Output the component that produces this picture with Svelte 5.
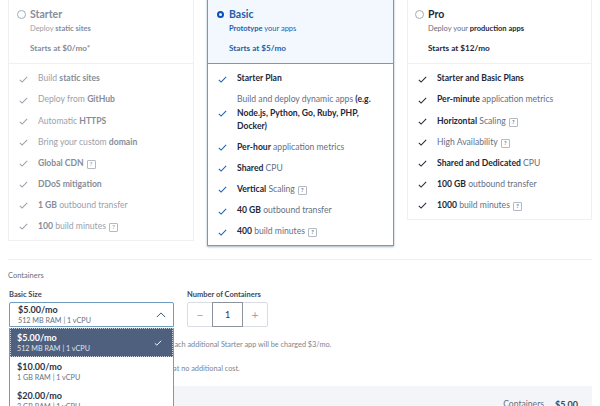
<script>
  const plans = [
    {
      key: 'starter', name: 'Starter', tagline: [['Deploy ', 0], ['static sites', 1]], price: 'Starts at $0/mo*',
      features: [
        [['Build ', 0], ['static sites', 1]],
        [['Deploy from ', 0], ['GitHub', 1]],
        [['Automatic ', 0], ['HTTPS', 1]],
        [['Bring your custom ', 0], ['domain', 1]],
        [['Global CDN', 1], ['?', 2]],
        [['DDoS mitigation', 1]],
        [['1 GB', 1], [' outbound transfer', 0]],
        [['100', 1], [' build minutes', 0], ['?', 2]]
      ]
    },
    {
      key: 'basic', name: 'Basic', tagline: [['Prototype', 1], [' your apps', 0]], price: 'Starts at $5/mo',
      features: [
        [['Starter Plan', 1]],
        [['Build and deploy dynamic apps ', 0], ['(e.g. Node.js, Python, Go, Ruby, PHP, Docker)', 1]],
        [['Per-hour', 1], [' application metrics', 0]],
        [['Shared', 1], [' CPU', 0]],
        [['Vertical', 1], [' Scaling', 0], ['?', 2]],
        [['40 GB', 1], [' outbound transfer', 0]],
        [['400', 1], [' build minutes', 0], ['?', 2]]
      ]
    },
    {
      key: 'pro', name: 'Pro', tagline: [['Deploy your ', 0], ['production apps', 1]], price: 'Starts at $12/mo',
      features: [
        [['Starter and Basic Plans', 1]],
        [['Per-minute', 1], [' application metrics', 0]],
        [['Horizontal', 1], [' Scaling', 0], ['?', 2]],
        [['High Availability', 0], ['?', 2]],
        [['Shared and Dedicated', 1], [' CPU', 0]],
        [['100 GB', 1], [' outbound transfer', 0]],
        [['1000', 1], [' build minutes', 0], ['?', 2]]
      ]
    }
  ];

  const sizes = [
    { price: '$5.00/mo', spec: '512 MB RAM | 1 vCPU', selected: true },
    { price: '$10.00/mo', spec: '1 GB RAM | 1 vCPU' },
    { price: '$20.00/mo', spec: '2 GB RAM | 1 vCPU' }
  ];
</script>

{#snippet rich(parts)}
  {#each parts as [text, kind]}
    {#if kind === 2}
      <span class="help">?</span>
    {:else if kind === 1}
      <b>{text}</b>
    {:else}
      {text}
    {/if}
  {/each}
{/snippet}

<div class="page">
  <div class="plans">
    {#each plans as plan}
      <section class="plan {plan.key}">
        <header>
          <div class="title">
            <span class="radio"></span>
            <span class="name">{plan.name}</span>
          </div>
          <p class="tagline">{@render rich(plan.tagline)}</p>
          <p class="price">{plan.price}</p>
        </header>
        <ul>
          {#each plan.features as feature}
            <li>
              <svg class="check" viewBox="0 0 10 8" width="9" height="7">
                <path d="M0.8 4.4 L3.4 6.9 L9.2 1" fill="none" stroke="currentColor" stroke-width="1.2" />
              </svg>
              <span>{@render rich(feature)}</span>
            </li>
          {/each}
        </ul>
      </section>
    {/each}
  </div>

  <section class="containers">
    <h4>Containers</h4>
    <div class="controls">
      <div class="field size">
        <label for="size">Basic Size</label>
        <div class="select" id="size">
          <div>
            <div class="amount">$5.00/mo</div>
            <div class="spec">512 MB RAM | 1 vCPU</div>
          </div>
          <svg viewBox="0 0 12 7" width="10" height="6">
            <path d="M1 6 L6 1 L11 6" fill="none" stroke="#3d5878" stroke-width="1.2" />
          </svg>
        </div>
        <div class="menu">
          {#each sizes as size}
            <div class="option" class:selected={size.selected}>
              <div>
                <div class="amount">{size.price}</div>
                <div class="spec">{size.spec}</div>
              </div>
              {#if size.selected}
                <svg viewBox="0 0 10 8" width="8" height="6">
                  <path d="M0.8 4.4 L3.4 6.9 L9.2 1" fill="none" stroke="#fff" stroke-width="1.3" />
                </svg>
              {/if}
            </div>
          {/each}
        </div>
      </div>
      <div class="field">
        <span class="label">Number of Containers</span>
        <div class="stepper">
          <span class="step">−</span>
          <span class="count">1</span>
          <span class="step">+</span>
        </div>
      </div>
    </div>
    <p class="note first">Your first three Starter apps are free every month. Each additional Starter app will be charged $3/mo.</p>
    <p class="note second">Bandwidth and builds for Starter apps are included at no additional cost.</p>
    <div class="summary">
      <span>Containers</span>
      <span class="total">$5.00</span>
    </div>
  </section>
</div>

<style>
  :global(body) {
    background: #fff;
  }

  .page {
    height: 406px;
    width: 600px;
    overflow: hidden;
    font-family: "Lato", "Open Sans", sans-serif;
    font-size: 9px;
    color: #66707f;
  }

  .plans {
    display: grid;
    grid-template-columns: 186px 187px 185px;
    column-gap: 13px;
    padding: 0 8px;
    margin-top: -10px;
    align-items: start;
  }

  .plan {
    border: 1px solid #eef0f3;
    box-sizing: border-box;
  }

  .plan header {
    padding: 17px 0 10px 21px;
    height: 73px;
    box-sizing: border-box;
    border-bottom: 1px solid #eef0f3;
    position: relative;
  }

  .title {
    display: flex;
    align-items: center;
    height: 12px;
  }

  .radio {
    position: absolute;
    left: 8px;
    width: 7px;
    height: 7px;
    border: 1px solid #a4acb6;
    border-radius: 50%;
  }

  .name {
    font-size: 10.5px;
    font-weight: 700;
  }

  .tagline {
    margin: 3px 0 0;
    font-size: 7.5px;
    line-height: 11px;
  }

  .price {
    margin: 9px 0 0;
    font-size: 8.2px;
    font-weight: 700;
    line-height: 11px;
  }

  b {
    font-weight: 700;
  }

  ul {
    list-style: none;
    margin: 0;
    padding: 4.5px 0 4px 10px;
  }

  li {
    display: flex;
    align-items: center;
    gap: 10px;
    padding: 3.9px 10px 3.9px 0;
    font-size: 8.6px;
    line-height: 13.3px;
  }

  .check {
    flex: none;
    color: #1f2937;
  }

  .help {
    display: inline-block;
    width: 7px;
    height: 7px;
    line-height: 7px;
    margin-left: 3px;
    border: 1px solid #b4bac3;
    border-radius: 1px;
    font-size: 5.5px;
    text-align: center;
    vertical-align: 0;
    font-weight: 700;
  }

  .starter {
    color: #9aa1ab;
    height: 251px;
  }

  .starter .name,
  .starter .price,
  .starter b {
    color: #858d99;
  }

  .starter .check {
    color: #9aa1ab;
  }

  .basic {
    height: 256px;
    border: 1px solid #6f9cc1;
    box-shadow: 0 1px 2px rgba(60, 90, 120, 0.45);
  }

  .basic header {
    background: #f2f8fd;
    border-bottom-color: #6f9cc1;
  }

  .basic .radio {
    left: 9px;
    width: 3px;
    height: 3px;
    border: 2.5px solid #0b4fb8;
  }

  .basic .name,
  .basic .tagline,
  .basic .price {
    color: #1f5fa8;
  }

  .basic .tagline b {
    color: #1f5fa8;
  }

  .basic .check {
    color: #1f5fa8;
  }

  .basic b,
  .pro b {
    color: #1d2838;
  }

  .pro {
    height: 230px;
  }

  .pro header {
    padding-left: 20px;
  }

  .pro .radio {
    left: 7px;
  }

  .pro .name,
  .pro .price {
    color: #1d2838;
  }

  .containers {
    margin: 13px 8px 0;
    border-top: 1px solid #eef0f3;
    padding-top: 10px;
    position: relative;
    height: 146px;
  }

  h4 {
    margin: 0;
    font-size: 7.5px;
    line-height: 11px;
    font-weight: 400;
    color: #66707f;
  }

  .controls {
    display: flex;
    gap: 13px;
    margin-top: 9px;
  }

  .field {
    display: flex;
    flex-direction: column;
    gap: 2px;
  }

  .size {
    width: 165px;
    position: relative;
    margin-left: 1px;
  }

  label,
  .label {
    font-size: 7.5px;
    font-weight: 700;
    line-height: 10px;
    color: #3d4857;
  }

  .select {
    height: 25px;
    box-sizing: border-box;
    border: 1px solid #6f9cc1;
    border-radius: 2px 2px 0 0;
    display: flex;
    justify-content: space-between;
    align-items: center;
    padding: 0 7px 0 8px;
  }

  .amount {
    font-size: 9px;
    font-weight: 700;
    line-height: 11px;
    color: #2b3544;
  }

  .spec {
    font-size: 7.2px;
    line-height: 11px;
    color: #66707f;
  }

  .menu {
    position: absolute;
    top: 38px;
    left: 0;
    width: 100%;
    box-sizing: border-box;
    background: #fff;
    border: 1px solid #6f9cc1;
    border-top: 0;
    z-index: 1;
  }

  .option {
    height: 29px;
    box-sizing: border-box;
    display: flex;
    justify-content: space-between;
    align-items: center;
    padding: 0 11px 0 7px;
  }

  .option.selected {
    background: #4f607e;
    outline: 1px dotted #c7cfdb;
    outline-offset: -1px;
  }

  .option.selected .amount {
    color: #fff;
  }

  .option.selected .spec {
    color: #dfe4ec;
  }

  .stepper {
    display: flex;
    height: 25px;
    width: 81px;
    box-sizing: border-box;
    border: 1px solid #d9dde3;
    border-radius: 2px;
  }

  .step {
    flex: 1;
    display: flex;
    align-items: center;
    justify-content: center;
    color: #9aa3ae;
    font-size: 12px;
  }

  .count {
    width: 31px;
    flex: none;
    box-sizing: border-box;
    border: 1px solid #8c939d;
    margin: -1px 0;
    display: flex;
    align-items: center;
    justify-content: center;
    font-size: 9px;
    color: #2b3544;
  }

  .note {
    margin: 0;
    padding-left: 2px;
    font-size: 7.3px;
    line-height: 11px;
    color: #7d8591;
    white-space: nowrap;
  }

  .first {
    margin-top: 12px;
  }

  .second {
    margin-top: 13px;
  }

  .summary {
    margin: 12px 0 0 2px;
    height: 30px;
    background: #f3f5f9;
    display: flex;
    justify-content: flex-end;
    gap: 11px;
    padding: 13px 14px 0 0;
    box-sizing: border-box;
    font-size: 8.6px;
    line-height: 11px;
  }

  .total {
    font-weight: 700;
    font-size: 9px;
    color: #3d4857;
  }
</style>
